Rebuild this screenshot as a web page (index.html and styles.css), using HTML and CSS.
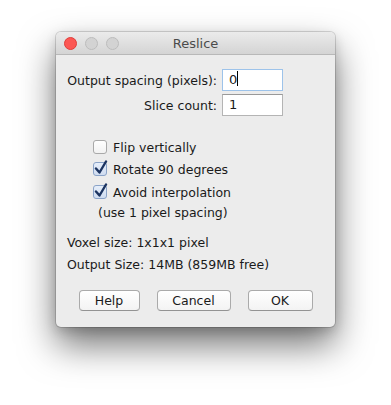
FILE: index.html
```html
<!DOCTYPE html>
<html lang="en">
<head>
  <meta charset="UTF-8">
  <title>Reslice</title>
  <link rel="stylesheet" href="styles.css">
</head>
<body>

<div class="window">
  <div class="titlebar">
    <div class="lights">
      <span class="light close"></span>
      <span class="light"></span>
      <span class="light"></span>
    </div>
    <div class="title">Reslice</div>
    <div></div>
  </div>

  <div class="content">
    <div class="fields">
      <label>Output spacing (pixels):</label>
      <div class="field focused">0<i class="caret"></i></div>
      <label>Slice count:</label>
      <div class="field">1</div>
    </div>

    <div class="checks">
      <div class="check">
        <span class="box"></span>
        <span>Flip vertically</span>
      </div>
      <div class="check">
        <span class="box on">
          <svg width="16" height="16" viewBox="0 0 16 16"><path d="M3 8.5 L6.5 12.5 L13 1.5" fill="none" stroke="#1c3461" stroke-width="2.4" stroke-linecap="round" stroke-linejoin="round"/></svg>
        </span>
        <span>Rotate 90 degrees</span>
      </div>
      <div class="check">
        <span class="box on">
          <svg width="16" height="16" viewBox="0 0 16 16"><path d="M3 8.5 L6.5 12.5 L13 1.5" fill="none" stroke="#1c3461" stroke-width="2.4" stroke-linecap="round" stroke-linejoin="round"/></svg>
        </span>
        <span>Avoid interpolation</span>
      </div>
      <div class="note">(use 1 pixel spacing)</div>
    </div>

    <div class="info">
      <div>Voxel size: 1x1x1 pixel</div>
      <div>Output Size: 14MB (859MB free)</div>
    </div>

    <div class="buttons">
      <button class="btn help">Help</button>
      <button class="btn cancel">Cancel</button>
      <button class="btn ok">OK</button>
    </div>
  </div>
</div>

</body>
</html>
```

FILE: styles.css
```css
html, body {
  height: 100%;
}
body {
  margin: 0;
  background: #ffffff;
  font-family: "DejaVu Sans", sans-serif;
  font-size: 12.5px;
  color: #1a1a1a;
}
.window {
  width: 279px;
  margin: 32px 0 0 56px;
  background: #ececec;
  border-radius: 5px;
  box-shadow: 0 0 0 1px rgba(0, 0, 0, 0.14), 0 4px 12px rgba(0, 0, 0, 0.15), 0 18px 36px rgba(0, 0, 0, 0.55);
  overflow: hidden;
}
.titlebar {
  height: 22px;
  display: grid;
  grid-template-columns: 1fr auto 1fr;
  align-items: center;
  padding: 0 8px;
  background: linear-gradient(#ebebeb, #d4d4d4);
  border-bottom: 1px solid #b8b8b8;
}
.lights {
  display: flex;
  gap: 8px;
}
.light {
  width: 11px;
  height: 11px;
  border-radius: 50%;
  background: #d3d3d3;
  border: 0.5px solid #bcbcbc;
}
.light.close {
  background: #fc5753;
  border-color: #df3e3a;
}
.title {
  font-size: 13px;
  color: #4b4b4b;
}
.content {
  padding: 14px 11px 16px;
}
.fields {
  display: grid;
  grid-template-columns: 150px 61px;
  column-gap: 5px;
  row-gap: 3px;
  align-items: center;
}
.fields label {
  text-align: right;
  white-space: nowrap;
}
.field {
  height: 20px;
  line-height: 20px;
  padding-left: 6px;
  background: #fff;
  border: 1px solid #b4b4b4;
  border-top-color: #999;
  font-size: 13px;
}
.field.focused {
  border-color: #9dc3ea;
}
.caret {
  display: inline-block;
  width: 1px;
  height: 15px;
  background: #000;
  vertical-align: -2px;
}
.checks {
  margin-top: 20px;
  padding-left: 26px;
}
.check {
  height: 22px;
  display: flex;
  align-items: center;
  gap: 6px;
}
.check:nth-child(3) {
  height: 24px;
}
.box {
  position: relative;
  width: 12px;
  height: 12px;
  border: 1px solid #a9a9a9;
  border-radius: 3px;
  background: linear-gradient(#ffffff, #f2f2f2);
}
.box.on {
  background: linear-gradient(#e6eefa, #cfdcf0);
  border-color: #8aa3c8;
}
.box svg {
  position: absolute;
  left: -1px;
  top: -3px;
}
.note {
  padding-left: 5px;
  line-height: 18px;
}
.info {
  margin-top: 10px;
  line-height: 22px;
}
.buttons {
  margin-top: 14px;
  display: flex;
  justify-content: center;
  gap: 17px;
}
.btn {
  height: 21px;
  padding: 0;
  font-family: "DejaVu Sans", sans-serif;
  font-size: 12.5px;
  color: #1a1a1a;
  background: linear-gradient(#ffffff, #f3f3f3);
  border: 1px solid #aaa;
  border-bottom-color: #939393;
  border-radius: 4px;
}
.btn.help { width: 61px; }
.btn.cancel { width: 74px; }
.btn.ok { width: 65px; }
```
